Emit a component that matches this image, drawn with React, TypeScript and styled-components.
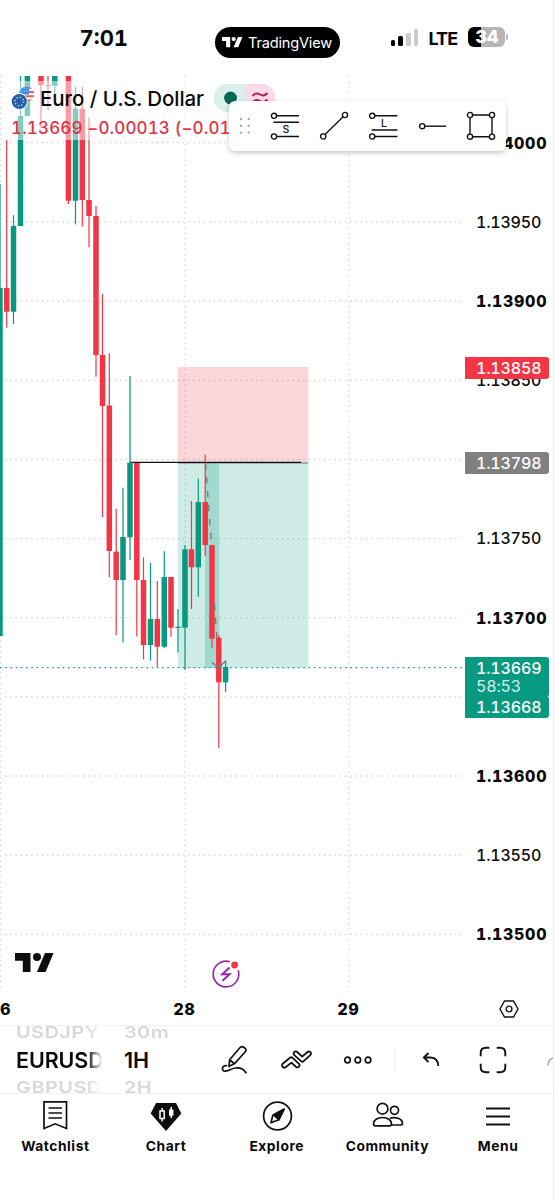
import React from "react";
import styled, { createGlobalStyle } from "styled-components";

const Global = createGlobalStyle`
  * { box-sizing: border-box; }
  body { margin: 0; background: #fff; color: #0a0a0a; font-family: Inter, "Liberation Sans", sans-serif; }
`;

const GREEN = "#089981";
const RED = "#f23645";

const Screen = styled.div`
  width: 554px;
  height: 1200px;
  display: flex;
  flex-direction: column;
  overflow: hidden;
  background: #fff;
  border-right: 1px solid #ececec;
`;

/* ---------- status bar ---------- */
const StatusBar = styled.header`
  height: 76px;
  flex: none;
  display: flex;
  align-items: flex-start;
  padding: 26px 0 0 79.5px;
`;
const Clock = styled.div`
  width: 135px;
  flex: none;
  font-size: 22px;
  line-height: 24px;
  font-weight: 700;
  letter-spacing: 0;
  font-variant-numeric: tabular-nums;
`;
const AppPill = styled.div`
  width: 125px;
  height: 31px;
  flex: none;
  margin-top: 1px;
  border-radius: 16px;
  background: #000;
  color: #fff;
  display: flex;
  align-items: center;
  padding-left: 7.5px;
  gap: 5.5px;
  font-size: 14.6px;
  letter-spacing: -0.2px;
`;
const Signal = styled.div`
  margin-left: 51px;
  height: 20px;
  display: flex;
  align-items: flex-end;
  gap: 2.8px;
`;
const SignalBar = styled.i<{ $h: number; $on?: boolean }>`
  width: 4.9px;
  height: ${(p) => p.$h}px;
  border-radius: 1.5px;
  background: ${(p) => (p.$on ? "#000" : "#cbcbcb")};
`;
const Network = styled.div`
  margin-left: 10px;
  width: 40px;
  font-size: 18px;
  line-height: 25px;
  font-weight: 700;
  letter-spacing: -0.9px;
`;
const Battery = styled.div`
  width: 36.5px;
  height: 20px;
  margin-top: 1px;
  border-radius: 6px;
  background: linear-gradient(90deg, #000 34%, #b5b5b5 34%);
  color: #fff;
  font-size: 18px;
  line-height: 20px;
  font-weight: 800;
  text-align: center;
  letter-spacing: -0.6px;
`;
const BatteryTip = styled.i`
  width: 2px;
  height: 6px;
  margin: 8px 0 0 1px;
  border-radius: 0 2px 2px 0;
  background: #b5b5b5;
`;

/* ---------- chart ---------- */
const ChartPane = styled.main`
  position: relative;
  height: 914px;
  flex: none;
  display: flex;
  font-variant-numeric: tabular-nums;
`;
const PlotSvg = styled.svg`
  width: 465px;
  height: 914px;
  flex: none;
  display: block;
`;
const PriceScale = styled.div`
  flex: 1;
  padding: 27.5px 0 0 11px;
  display: flex;
  flex-direction: column;
`;
const PriceLabel = styled.div<{ $strong?: boolean }>`
  height: 79.18px;
  flex: none;
  line-height: 79.18px;
  font-size: 16px;
  font-weight: ${(p) => (p.$strong ? 800 : 500)};
  letter-spacing: ${(p) => (p.$strong ? "0.7px" : "-0.2px")};
`;
const PriceTag = styled.div<{ $y: number; $h: number; $bg: string }>`
  position: absolute;
  left: 465px;
  top: ${(p) => p.$y}px;
  width: 84px;
  height: ${(p) => p.$h}px;
  padding-left: 11px;
  border-radius: 0 3px 3px 0;
  background: ${(p) => p.$bg};
  color: #fff;
  font-size: 16px;
  line-height: 22px;
  font-weight: 500;
  letter-spacing: -0.15px;
`;
const Countdown = styled.div`
  line-height: 15px;
  font-weight: 400;
  color: #d3efea;
`;
const Legend = styled.div`
  position: absolute;
  left: 11px;
  top: 5px;
  width: 218px;
  height: 59px;
  background: rgba(255, 255, 255, 0.5);
`;
const LegendTitle = styled.div`
  height: 34px;
  display: flex;
  align-items: center;
  gap: 5px;
  font-size: 20.5px;
  font-weight: 500;
  letter-spacing: -0.07px;
  white-space: nowrap;
`;
const LegendChange = styled.div`
  height: 25px;
  line-height: 26px;
  font-size: 17px;
  font-weight: 500;
  letter-spacing: 0.13px;
  white-space: nowrap;
  color: #dd3347;
`;
const MarketPill = styled.div`
  position: absolute;
  left: 214px;
  top: 8px;
  width: 61px;
  height: 28px;
  border-radius: 14px;
  display: flex;
  overflow: hidden;
  background: #d9efec;
`;
const PillHalf = styled.div<{ $bg: string; $w: number }>`
  width: ${(p) => p.$w}px;
  background: ${(p) => p.$bg};
  display: flex;
  align-items: center;
  justify-content: center;
`;
const Toolbar = styled.div`
  position: absolute;
  left: 229px;
  top: 25px;
  width: 276.5px;
  height: 50px;
  padding-left: 9px;
  display: flex;
  align-items: center;
  border-radius: 6px;
  background: #fff;
  box-shadow: 0 2px 5px rgba(0, 0, 0, 0.22);
`;
const Tool = styled.div`
  width: 48.9px;
  padding-left: 1px;
  display: flex;
  justify-content: center;
`;
const Grip = styled.div`
  width: 22px;
  display: flex;
`;
const ChartLogo = styled.div`
  position: absolute;
  left: 15px;
  top: 877px;
`;
const EventMark = styled.div`
  position: absolute;
  left: 211px;
  top: 883px;
`;
const TimeScale = styled.div`
  height: 36px;
  flex: none;
  display: flex;
  align-items: center;
  padding-top: 2px;
  font-size: 16px;
  font-weight: 800;
  letter-spacing: 0.5px;
  border-bottom: 1px solid #f1f1f1;
`;
const TimeLabel = styled.div<{ $w: number; $align?: string }>`
  width: ${(p) => p.$w}px;
  flex: none;
  text-align: ${(p) => p.$align || "center"};
`;
const ScaleSettings = styled.div`
  width: 157px;
  flex: none;
  display: flex;
  justify-content: center;
`;

/* ---------- symbol bar ---------- */
const SymbolBar = styled.section`
  height: 68px;
  flex: none;
  display: flex;
  padding-left: 16px;
  overflow: hidden;
  border-bottom: 1px solid #f1f1f1;
`;
const Wheel = styled.div<{ $w: number; $gap: number; $fade?: boolean }>`
  width: ${(p) => p.$w}px;
  height: 68px;
  margin-right: ${(p) => p.$gap}px;
  flex: none;
  display: flex;
  flex-direction: column;
  justify-content: center;
  white-space: nowrap;
  ${(p) => p.$fade && "mask-image: linear-gradient(90deg, #000 82%, rgba(0, 0, 0, 0.15) 98%, transparent 100%);"}
`;
const WheelGhost = styled.div`
  height: 17px;
  flex: none;
  line-height: 17px;
  font-size: 20px;
  font-weight: 600;
  letter-spacing: 0.4px;
  color: #d8d8d8;
  transform: scaleY(0.8);
`;
const WheelValue = styled.div`
  height: 38px;
  flex: none;
  line-height: 38px;
  font-size: 21.5px;
  font-weight: 600;
  letter-spacing: -0.1px;
`;
const Actions = styled.div`
  flex: 1;
  display: flex;
  align-items: center;
`;
const Action = styled.div<{ $w: number }>`
  width: ${(p) => p.$w}px;
  flex: none;
  display: flex;
  justify-content: center;
`;
const Divider = styled.i`
  width: 1px;
  height: 24px;
  margin-left: 13px;
  flex: none;
  background: #efefef;
`;
const EdgeAction = styled.div`
  width: 7px;
  flex: none;
  margin-left: 27px;
  display: flex;
`;

/* ---------- navigation ---------- */
const Nav = styled.nav`
  flex: 1;
  display: flex;
  font-size: 13.8px;
  font-weight: 700;
  letter-spacing: 0.55px;
`;
const NavItem = styled.div`
  width: 110.7px;
  flex: none;
  display: flex;
  flex-direction: column;
  align-items: center;
  padding-top: 5px;
`;
const NavLabel = styled.div`
  margin-top: 6px;
  line-height: 18px;
`;

/* x centre, high, low, body top, body bottom, rising */
type Candle = [number, number, number, number, number, boolean];
const candles: Candle[] = [
  [0, 184, 636, 288, 636, true],
  [6.7, 140, 327.7, 288, 311.7, false],
  [13.5, 215.3, 324, 226, 311.7, true],
  [20.5, 76, 226, 116, 226, true],
  [27.4, 76, 116, 76, 116, true],
  [41, 76, 128, 76, 85, false],
  [48, 76, 110, 84.8, 86, false],
  [54.8, 76, 98, 76, 85.7, true],
  [68.4, 76, 204, 76, 200.7, false],
  [75.5, 87, 224.3, 108.7, 200.7, true],
  [82.3, 87, 226.7, 108.7, 200, false],
  [89, 117.7, 247.3, 200, 216, false],
  [96, 206, 376.7, 216, 355, false],
  [102.5, 294, 517.3, 355, 406, false],
  [109.3, 353.3, 577.3, 405.5, 551, false],
  [116.2, 509, 635, 551.7, 580, false],
  [123, 487.7, 642.3, 537, 580, true],
  [130, 376, 560, 462.7, 537.3, true],
  [136.8, 463, 636.5, 463, 580, false],
  [143.5, 557.3, 659.3, 580, 645, false],
  [150.5, 562.7, 660.7, 619, 645, true],
  [157.3, 581, 666.7, 619, 646.7, false],
  [164.3, 551.3, 648, 577, 646.7, true],
  [171, 577, 636.7, 577, 627.7, false],
  [178, 609.3, 652.3, 626.8, 628, true],
  [185, 545, 670, 549.3, 627.7, true],
  [191.5, 501, 609, 549.3, 567.3, false],
  [198.3, 478.7, 596.7, 502, 567.3, true],
  [205.2, 454.5, 555.7, 502, 545, false],
  [212, 545, 647.7, 545, 638.7, false],
  [218.8, 635, 748.3, 637.7, 682.3, false],
  [225.6, 660.3, 692, 667, 682.3, true],
];
const gridRows = [142.7, 222, 301, 380.5, 459.5, 538.7, 617.7, 697, 776, 855, 934.5];
const prices = ["1.14000", "1.13950", "1.13900", "1.13850", "", "1.13750", "1.13700", "", "1.13600", "1.13550", "1.13500"];

const Plot = () => (
  <PlotSvg viewBox="0 76 465 914">
    <g stroke="#d4d4d4" strokeWidth="1.3" strokeDasharray="1.4 3.83">
      {gridRows.map((y) => (
        <line key={y} x1="5" x2="461" y1={y} y2={y} />
      ))}
      {[0.5, 185, 349].map((x) => (
        <line key={x} x1={x} x2={x} y1="76" y2="990" />
      ))}
    </g>
    <rect x="177.7" y="367" width="130.6" height="95.7" fill={RED} fillOpacity="0.2" />
    <rect x="177.7" y="462.7" width="130.6" height="205.3" fill={GREEN} fillOpacity="0.2" />
    <rect x="205" y="462.7" width="14.3" height="205.3" fill={GREEN} fillOpacity="0.22" />
    <line x1="178" x2="308.3" y1="463" y2="463" stroke="#787878" strokeWidth="1.2" />
    <line x1="130" x2="301" y1="462.3" y2="462.3" stroke="#111" strokeWidth="1.2" />
    {candles.map(([x, hi, lo, top, bot, up]) => (
      <g key={x} fill={up ? GREEN : RED}>
        <rect x={x - 0.6} y={hi} width="1.2" height={lo - hi} />
        <rect x={x - 2.75} y={top} width="5.5" height={bot - top} />
      </g>
    ))}
    <g fill="none" stroke="#707a7a" strokeWidth="1.3">
      <line x1="205.5" y1="463" x2="211.5" y2="545" strokeDasharray="6.5 7.5" />
      <line x1="214.5" y1="604" x2="217" y2="640" strokeDasharray="6.5 7.5" />
      <path d="M212 662.5l6.5 5 7.5-6.5" />
    </g>
    <line x1="0" x2="462" y1="667.6" y2="667.6" stroke={GREEN} strokeWidth="1.4" strokeDasharray="1.5 3.73" />
  </PlotSvg>
);

const Mark = ({ w, fill }: { w: number; fill: string }) => (
  <svg width={w} height={w / 1.98} viewBox="0 0 38.6 19.5" fill={fill}>
    <path d="M0 0h15.5v19.5H7.8V7.7H0z" />
    <circle cx="22" cy="4" r="4" />
    <path d="M30 0h8.6l-8.2 19.5h-8.7z" />
  </svg>
);

const ToolIcon = ({ children }: { children: React.ReactNode }) => (
  <svg width="30" height="30" viewBox="0 0 30 30" fill="none" stroke="#111" strokeWidth="1.4">
    {children}
  </svg>
);

const Flags = () => (
  <svg width="24" height="26" viewBox="0 0 24 26">
    <defs>
      <clipPath id="us"><circle cx="15.8" cy="9" r="7.6" /></clipPath>
    </defs>
    <g clipPath="url(#us)">
      <rect x="8" y="1" width="16" height="16" fill="#fff" />
      <path d="M8 2.6h16M8 7h16M8 11.3h16M8 15.6h16" stroke="#ee5a5a" strokeWidth="2.1" />
      <rect x="8" y="0" width="10" height="9.5" fill="#3a8bea" />
      <path d="M10 3.2h8M10 6.2h8" stroke="#fff" strokeWidth="0.9" strokeDasharray="1 1.7" />
    </g>
    <circle cx="8.3" cy="16.5" r="8.4" fill="#fff" />
    <circle cx="8.3" cy="16.5" r="7.6" fill="#1c5fb5" />
    <circle cx="8.3" cy="16.5" r="4.3" fill="none" stroke="#e6d46a" strokeWidth="1.5" strokeDasharray="1.4 1.98" />
  </svg>
);

const WheelRows = ({ items }: { items: string[] }) => (
  <>
    <WheelGhost>{items[0]}</WheelGhost>
    <WheelValue>{items[1]}</WheelValue>
    <WheelGhost>{items[2]}</WheelGhost>
  </>
);

const NavIcon = ({ children }: { children: React.ReactNode }) => (
  <svg width="34" height="32" viewBox="0 0 34 32" fill="none" stroke="#111" strokeWidth="1.7">
    {children}
  </svg>
);

export default function App() {
  return (
    <Screen>
      <Global />
      <StatusBar>
        <Clock>7:01</Clock>
        <AppPill>
          <Mark w={20.5} fill="#fff" />
          TradingView
        </AppPill>
        <Signal>
          <SignalBar $h={6.5} $on />
          <SignalBar $h={10} $on />
          <SignalBar $h={13.5} />
          <SignalBar $h={17} />
        </Signal>
        <Network>LTE</Network>
        <Battery>34</Battery>
        <BatteryTip />
      </StatusBar>

      <ChartPane>
        <Plot />
        <PriceScale>
          {prices.map((p, i) => (
            <PriceLabel key={i} $strong={i % 2 === 0}>{p}</PriceLabel>
          ))}
        </PriceScale>
        <PriceTag $y={281} $h={21.5} $bg={RED}>1.13858</PriceTag>
        <PriceTag $y={376} $h={22} $bg="#808080">1.13798</PriceTag>
        <PriceTag $y={620} $h={22} $bg={GREEN}>1.13668</PriceTag>
        <PriceTag $y={581} $h={40} $bg={GREEN}>
          1.13669
          <Countdown>58:53</Countdown>
        </PriceTag>
        <Legend>
          <LegendTitle>
            <Flags />
            Euro / U.S. Dollar
          </LegendTitle>
          <LegendChange>1.13669 −0.00013 (−0.01</LegendChange>
        </Legend>
        <MarketPill>
          <PillHalf $bg="#d9efec" $w={31}>
            <svg width="14" height="14"><circle cx="7.5" cy="7" r="6.4" fill="#056656" /></svg>
          </PillHalf>
          <PillHalf $bg="#fbd9e7" $w={30}>
            <svg width="18" height="14" viewBox="0 0 18 14" fill="none" stroke="#b3205c" strokeWidth="2">
              <path d="M1.5 5C4 1.5 6.5 2 9 3.5S14 5 16.5 2M1.5 11.5C4 8 6.5 8.5 9 10S14 11.5 16.5 8.5" />
            </svg>
          </PillHalf>
        </MarketPill>
        <Toolbar>
          <Grip>
            <svg width="16" height="20" fill="#a8a8a8">
              {[3, 9.8, 16.6].map((y) => (
                <g key={y}>
                  <circle cx="3" cy={y} r="1.2" />
                  <circle cx="10.8" cy={y} r="1.2" />
                </g>
              ))}
            </svg>
          </Grip>
          <Tool>
            <ToolIcon>
              <circle cx="4" cy="4.8" r="2.6" />
              <circle cx="4" cy="25.5" r="2.6" />
              <path d="M6.6 4.8H29M3.5 11.3H29M6.6 25.5H29" />
              <text x="16" y="22" fontSize="10.5" fontWeight="500" textAnchor="middle" fill="#111" stroke="none">S</text>
            </ToolIcon>
          </Tool>
          <Tool>
            <ToolIcon>
              <circle cx="4.2" cy="25.5" r="2.6" />
              <circle cx="26" cy="4" r="2.6" />
              <path d="M6 23.6L24.2 5.8" />
            </ToolIcon>
          </Tool>
          <Tool>
            <ToolIcon>
              <circle cx="4.2" cy="4.8" r="2.6" />
              <circle cx="4.2" cy="25.5" r="2.6" />
              <path d="M6.8 4.8H29.5M3.7 19H29.5M6.8 25.5H29.5" />
              <text x="16" y="15.8" fontSize="10.5" fontWeight="500" textAnchor="middle" fill="#111" stroke="none">L</text>
            </ToolIcon>
          </Tool>
          <Tool>
            <ToolIcon>
              <circle cx="5.2" cy="15.2" r="2.6" />
              <path d="M7.8 15.2H29" />
            </ToolIcon>
          </Tool>
          <Tool>
            <ToolIcon>
              <circle cx="4" cy="4" r="2.6" />
              <circle cx="26" cy="4" r="2.6" />
              <circle cx="4" cy="25.7" r="2.6" />
              <circle cx="26" cy="25.7" r="2.6" />
              <path d="M6.6 4H23.4M6.6 25.7H23.4M4 6.6V23.1M26 6.6V23.1" />
            </ToolIcon>
          </Tool>
        </Toolbar>
        <ChartLogo>
          <Mark w={38.6} fill="#0d0d0d" />
        </ChartLogo>
        <EventMark>
          <svg width="30" height="30" viewBox="0 0 30 30" fill="none">
            <path d="M18.8 2.8A12.8 12.8 0 1 0 27.2 11.2" stroke="#9127a8" strokeWidth="1.6" />
            <path d="M18.5 8.5L11.2 15.2H18.6L11.5 21.8" stroke="#9127a8" strokeWidth="1.9" />
            <circle cx="23.6" cy="6" r="3.4" fill="#f23645" />
          </svg>
        </EventMark>
      </ChartPane>

      <TimeScale>
        <TimeLabel $w={102.5} $align="left">6</TimeLabel>
        <TimeLabel $w={164}>28</TimeLabel>
        <TimeLabel $w={164}>29</TimeLabel>
        <ScaleSettings>
          <svg width="20" height="18" viewBox="0 0 20 18" fill="none" stroke="#111" strokeWidth="1.4">
            <path d="M5.5 1H14.5L19 9L14.5 17H5.5L1 9Z" />
            <circle cx="10" cy="9" r="2.9" />
          </svg>
        </ScaleSettings>
      </TimeScale>

      <SymbolBar>
        <Wheel $w={86} $gap={22} $fade>
          <WheelRows items={["USDJPY", "EURUSD", "GBPUSD"]} />
        </Wheel>
        <Wheel $w={60} $gap={28}>
          <WheelRows items={["30m", "1H", "2H"]} />
        </Wheel>
        <Actions>
          <Action $w={46}>
            <svg width="28" height="30" viewBox="0 0 28 30" fill="none" stroke="#111" strokeWidth="1.7" strokeLinejoin="round" strokeLinecap="round">
              <path d="M8 21.5L8.6 14.8L19.3 2.3Q21 0.9 22.7 2.2L24.2 3.4Q25.8 5 24.3 6.7L13.6 18.6ZM8.8 15L13.4 18.7" />
              <path d="M5.500 20.600C2 20.200 0.600 23.200 2 25.400C4.500 28.400 9 23.600 14.500 23C19.500 22.500 23 24.500 25 27.800" />
            </svg>
          </Action>
          <Action $w={77}>
            <svg width="32" height="20" viewBox="0 0 32 20" fill="none" stroke="#111" strokeWidth="1.8" strokeLinejoin="round">
              <path d="M1.7 13.7L9 7.7Q10.3 6.7 11.6 7.9L18 13.8Q19.2 15.3 18 16.7Q16.7 18 15.2 17L10.4 12.6L4.600 17.300Q2.800 18.300 1.600 16.900Q0.500 15.200 1.700 13.700Z" />
              <path d="M13.3 2Q14.7 0.8 16.2 2L21.2 6.7L26.5 2Q28 0.8 29.5 2.2Q30.7 3.7 29.300 5.200L22.600 11.200Q21.300 12.300 20 11.100L13.300 5.100Q12 3.500 13.300 2Z" />
            </svg>
          </Action>
          <Action $w={46}>
            <svg width="30" height="10" viewBox="0 0 30 10" fill="none" stroke="#111" strokeWidth="1.7">
              <circle cx="4.5" cy="5" r="2.8" />
              <circle cx="14.8" cy="5" r="2.8" />
              <circle cx="25" cy="5" r="2.8" />
            </svg>
          </Action>
          <Divider />
          <Action $w={71}>
            <svg width="18" height="16" viewBox="0 0 18 16" fill="none" stroke="#111" strokeWidth="1.8">
              <path d="M6.5 1L1.8 5.5L6.5 10M1.8 5.5H8.5Q16 5.8 16.3 14" />
            </svg>
          </Action>
          <Action $w={54}>
            <svg width="28" height="28" viewBox="0 0 28 28" fill="none" stroke="#111" strokeWidth="1.9">
              <path d="M1.7 10.3V7Q1.7 1.7 7 1.7H10.3M17.7 1.7H21Q26.3 1.7 26.3 7V10.3M26.3 17.7V21Q26.3 26.3 21 26.3H17.7M10.3 26.3H7Q1.7 26.3 1.7 21V17.7" />
            </svg>
          </Action>
          <EdgeAction>
            <svg width="7" height="14" viewBox="0 0 7 14" fill="none" stroke="#a8a8a8" strokeWidth="1.5">
              <path d="M1 12.5Q1 6 7 4.8" />
            </svg>
          </EdgeAction>
        </Actions>
      </SymbolBar>

      <Nav>
        <NavItem>
          <NavIcon>
            <path d="M6 2.8H28.500V29.500L17.200 24.800L6 29.500ZM10.500 9H24M10.500 14H24M10.500 19H24" />
          </NavIcon>
          <NavLabel>Watchlist</NavLabel>
        </NavItem>
        <NavItem>
          <NavIcon>
            <path d="M7 4H27L32.300 14.500L17 32L1.700 14.500Z" fill="#0d0d0d" stroke="none" />
            <path d="M11 12H15.200V19.500H11ZM13.100 9V12M13.100 19.500V22.500M22.200 8V19" stroke="#fff" strokeWidth="1.500" />
            <rect x="20" y="10.5" width="4.4" height="6.2" fill="#fff" stroke="none" />
          </NavIcon>
          <NavLabel>Chart</NavLabel>
        </NavItem>
        <NavItem>
          <NavIcon>
            <circle cx="17.5" cy="17" r="13.9" />
            <path d="M11 23.800L12.800 16.500L24 10.200L18.800 20.800Z" strokeLinejoin="round" />
            <path d="M13.500 15.800L24 10.200L18.800 20.600Z" fill="#111" strokeLinejoin="round" />
          </NavIcon>
          <NavLabel>Explore</NavLabel>
        </NavItem>
        <NavItem>
          <NavIcon>
            <circle cx="12.5" cy="9.7" r="5.4" />
            <circle cx="24.5" cy="11.3" r="4" />
            <path d="M12.500 18.500C17.500 18.500 21.500 21 21.500 24.800Q21.500 26.800 19.500 26.800H5.500Q3.500 26.800 3.500 24.800C3.500 21 7.500 18.500 12.500 18.500ZM20 19.100C26.500 17.500 32.500 20 32.500 24.300Q32.500 26 30.500 26H21.300" />
          </NavIcon>
          <NavLabel>Community</NavLabel>
        </NavItem>
        <NavItem>
          <NavIcon>
            <path d="M5 9.500H29M5 17.500H29M5 25.500H29" strokeWidth="1.900" />
          </NavIcon>
          <NavLabel>Menu</NavLabel>
        </NavItem>
      </Nav>
    </Screen>
  );
}
